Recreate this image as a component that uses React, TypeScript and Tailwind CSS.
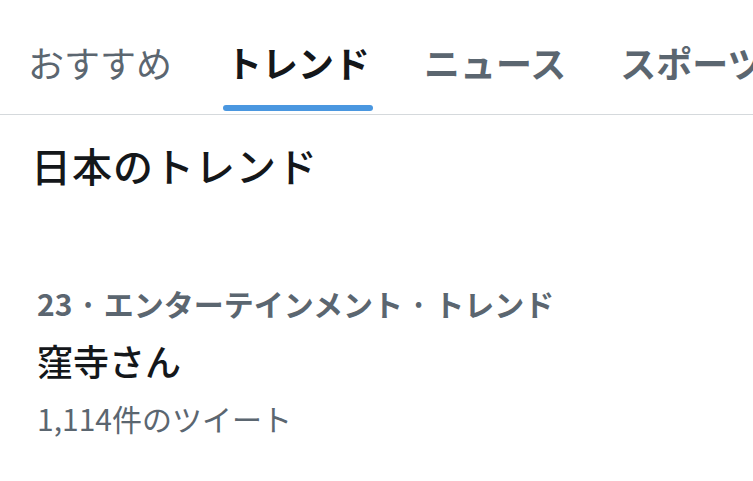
const tabs = [
  { label: 'おすすめ', active: false, bold: false },
  { label: 'トレンド', active: true, bold: true },
  { label: 'ニュース', active: false, bold: true },
  { label: 'スポーツ', active: false, bold: true },
];

export default function App() {
  return (
    <div
      className="w-[753px] h-[481px] overflow-hidden bg-white"
      style={{ fontFamily: '"Noto Sans CJK JP", "Noto Sans", sans-serif' }}
    >
      <nav className="flex h-[115px] border-b border-[#d5d9dc] pl-[28px] gap-[54px] whitespace-nowrap">
        {tabs.map((t) => (
          <div key={t.label} className="flex flex-col justify-end">
            <span
              className={`text-[36px] leading-none ${
                t.active
                  ? 'text-[#14171a] font-bold'
                  : t.bold
                    ? 'text-[#5b6670] font-bold'
                    : 'text-[#5b6670] font-normal'
              }`}
            >
              {t.label}
            </span>
            <div
              className={`mt-[25px] mb-[3px] -mx-[3px] h-[6px] rounded-full ${
                t.active ? 'bg-[#4a97e0]' : 'bg-transparent'
              }`}
            />
          </div>
        ))}
      </nav>

      <h2 className="pl-[31px] pt-[30px] text-[40px] leading-none font-medium text-[#14171a] tracking-[1px]">
        日本のトレンド
      </h2>

      <div className="pl-[37px] pt-[103px]">
        <div className="text-[30px] leading-none font-bold text-[#5b6670]">
          23 · エンターテインメント · トレンド
        </div>
        <div className="mt-[24px] text-[36px] leading-none font-medium text-[#14171a]">
          窪寺さん
        </div>
        <div className="mt-[25px] text-[30px] leading-none text-[#5b6670]">
          1,114件のツイート
        </div>
      </div>
    </div>
  );
}
